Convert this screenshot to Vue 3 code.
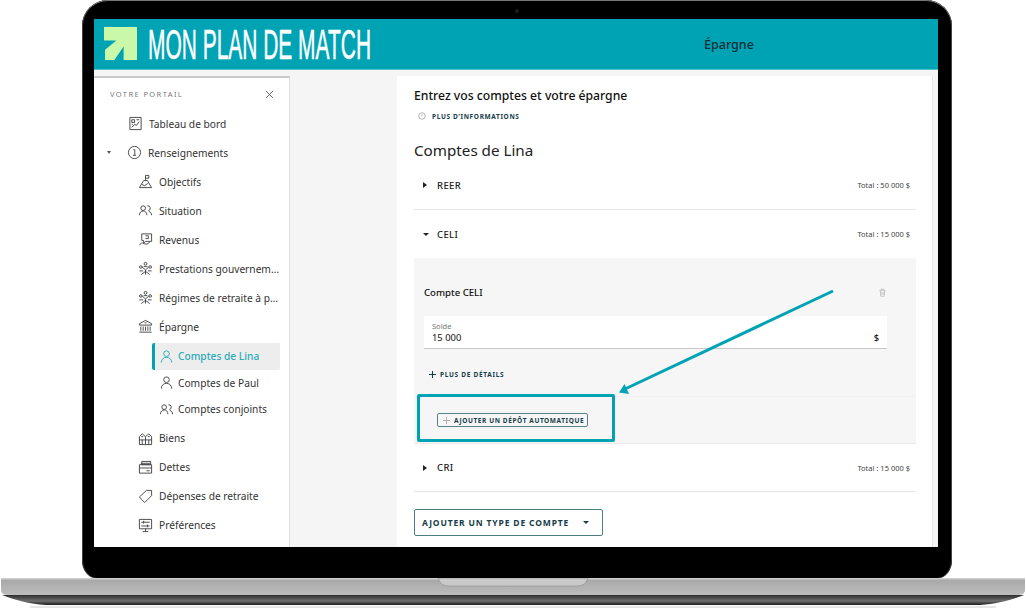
<script setup>
const icons = {
  dash: 'M2 1.500h12v13H2zM4 4h3v3H4zM4 12l3-3 2 1 3-4M9 4h3M4 9h1',
  info: 'M8 1.500a6.500 6.500 0 1 0 0 13a6.500 6.500 0 0 0 0-13zM6.800 5h1.500v6M6.300 11h3.400',
  goal: 'M1.500 14.500h13L10 7H6zM8 7V1.500h3.500v3H8M4 11l3 1.500 3.500-2.500',
  two: 'M5.500 3a2.300 2.300 0 1 0 0 5a2.300 2.300 0 0 0 0-5zM1.500 13c0-6 8-6 8 0M10 3a2.300 2.300 0 0 1 1 5M11.500 9c2 .5 3 2 3 4',
  money: 'M4 2h10.500v8H8l-2 2V9H4zM1.500 14c2-3 3.500-2.500 5-1.500l3 .5 3-2M8 4h3v3H8',
  gov: 'M8 1.500a1.500 1.500 0 1 0 0 3a1.500 1.500 0 0 0 0-3zM3 5a1.400 1.400 0 1 0 0 2.800a1.400 1.400 0 0 0 0-2.800zM13 5a1.400 1.400 0 1 0 0 2.800a1.400 1.400 0 0 0 0-2.800zM4.500 6.500L8 9.500l3.500-3M6 6h4M8 9.500v5M3.500 14.500L8 11l4.500 3.500M1.500 10.500h4M10.500 10.500h4',
  bank: 'M8 1.500L1.500 5v1.500h13V5zM3 8v4.500M5.500 8v4.500M8 8v4.500M10.500 8v4.500M13 8v4.500M1.500 14h13M7 4h2',
  one: 'M8 2a3 3 0 1 0 0 6a3 3 0 0 0 0-6zM2.500 14.500c0-7.500 11-7.500 11 0',
  house: 'M1.500 14.500V6L4.500 3 8 6l3.500-3 3 3v8.500zM1.500 9.500h13M4.500 9.500v5M8 6v8.500M11.500 9.500v5M3.500 6h2M10.500 6h2',
  debt: 'M4 1.500h9.500v3.500H4zM3 3.500h10M1.500 5h13v9h-13zM1.500 8.500h13M9 11.500h3.500',
  tag: 'M9 1.500h5.500V7L7 14.500 1.500 8.500zM11.500 4v.5',
  pref: 'M1.500 1.500h13v10h-13zM8 11.500v3M5 14.500h6M3.500 4.500h9M3.500 8.500h9M6 3v3M10 7v3'
}
const items = [
  { label: 'Tableau de bord', icon: 'dash', cls: 'lvl0' },
  { label: 'Renseignements', icon: 'info', cls: 'lvl0b', caret: true },
  { label: 'Objectifs', icon: 'goal', cls: 'lvl1' },
  { label: 'Situation', icon: 'two', cls: 'lvl1' },
  { label: 'Revenus', icon: 'money', cls: 'lvl1' },
  { label: 'Prestations gouvernementales', icon: 'gov', cls: 'lvl1' },
  { label: 'Régimes de retraite à prestations', icon: 'gov', cls: 'lvl1' },
  { label: 'Épargne', icon: 'bank', cls: 'lvl1' },
  { label: 'Comptes de Lina', icon: 'one', cls: 'lvl2 first active' },
  { label: 'Comptes de Paul', icon: 'one', cls: 'lvl2' },
  { label: 'Comptes conjoints', icon: 'two', cls: 'lvl2 last' },
  { label: 'Biens', icon: 'house', cls: 'lvl1' },
  { label: 'Dettes', icon: 'debt', cls: 'lvl1' },
  { label: 'Dépenses de retraite', icon: 'tag', cls: 'lvl1' },
  { label: 'Préférences', icon: 'pref', cls: 'lvl1' }
]
</script>

<template>
  <div class="page">
    <div class="lid">
      <span class="camera"></span>
      <div class="screen">
        <header class="topbar">
          <svg class="logo" viewBox="0 0 32 32" width="33" height="33">
            <path d="M0 0H32V32H19V19L10 32H1V22L12 13H0Z" fill="#c9f8a9" />
          </svg>
          <div class="brandbox"><span class="brand">MON PLAN DE MATCH</span></div>
          <div class="pagetitle">Épargne</div>
        </header>
        <div class="body">
          <aside class="sidebar">
            <div class="side-head">
              <span>VOTRE PORTAIL</span>
              <svg viewBox="0 0 10 10" width="9" height="9"><path d="M1 1l8 8M9 1l-8 8" stroke="#555" fill="none" /></svg>
            </div>
            <nav class="nav">
              <div v-for="it in items" :key="it.label" class="row" :class="it.cls">
                <span v-if="it.caret" class="caret down small"></span>
                <svg class="ico" viewBox="0 0 16 16" width="15" height="15"><path :d="icons[it.icon]" /></svg>
                <span class="lbl">{{ it.label }}</span>
              </div>
            </nav>
          </aside>
          <div class="gutter"></div>
          <main class="main">
            <h1>Entrez vos comptes et votre épargne</h1>
            <div class="more">
              <svg viewBox="0 0 16 16" width="8" height="8"><circle cx="8" cy="8" r="6.500" fill="none" stroke="#999" stroke-width="1.500" /><path d="M8 5v4" stroke="#999" stroke-width="1.500" /></svg>
              <span>PLUS D’INFORMATIONS</span>
            </div>
            <h2>Comptes de Lina</h2>

            <div class="acc">
              <span class="caret right"></span><b>REER</b><span class="total">Total : 50 000 $</span>
            </div>
            <div class="acc open">
              <span class="caret down"></span><b>CELI</b><span class="total">Total : 15 000 $</span>
            </div>

            <section class="panel">
              <div class="panel-top">
                <div class="panel-head">
                  <strong>Compte CELI</strong>
                  <svg viewBox="0 0 12 12" width="9" height="9"><path d="M2 3h8M3 3l.7 8h4.600L9 3M4.500 3V1.500h3V3M5 5v4M7 5v4" fill="none" stroke="#b5b5b5" /></svg>
                </div>
                <div class="field">
                  <div class="field-txt"><small>Solde</small><span>15 000</span></div>
                  <span class="cur">$</span>
                </div>
                <div class="details">
                  <svg viewBox="0 0 8 8" width="7" height="7"><path d="M4 0v8M0 4h8" stroke="#143c46" stroke-width="1.200" /></svg>
                  <span>PLUS DE DÉTAILS</span>
                </div>
              </div>
              <div class="panel-bottom">
                <button class="depot" type="button">
                  <svg viewBox="0 0 8 8" width="7" height="7"><path d="M4 0v8M0 4h8" stroke="#aaa" /></svg>
                  <span>AJOUTER UN DÉPÔT AUTOMATIQUE</span>
                </button>
              </div>
            </section>

            <div class="acc cri">
              <span class="caret right"></span><b>CRI</b><span class="total">Total : 15 000 $</span>
            </div>

            <button class="addtype" type="button">
              <span>AJOUTER UN TYPE DE COMPTE</span><span class="caret down dark"></span>
            </button>
          </main>
          <div class="edge"></div>
        </div>
      </div>
    </div>

    <svg class="base" viewBox="0 0 1026 30" width="1026" height="30">
      <defs>
        <linearGradient id="silver" x1="0" y1="0" x2="0" y2="1">
          <stop offset="0" stop-color="#d6d6d6" />
          <stop offset=".15" stop-color="#a9a9a9" />
          <stop offset="1" stop-color="#bdbdbd" />
        </linearGradient>
        <linearGradient id="under" x1="0" y1="0" x2="0" y2="1">
          <stop offset="0" stop-color="#2e2e2e" />
          <stop offset=".6" stop-color="#6f6f6f" />
          <stop offset="1" stop-color="#1c1c1c" />
        </linearGradient>
      </defs>
      <path d="M2 17C14 22 30 26 46 27H980C996 26 1012 22 1024 17Z" fill="url(#under)" />
      <path d="M1 0H1025V12Q1025 17 1018 17H8Q1 17 1 12Z" fill="url(#silver)" />
      <path d="M438 0H588L586 4Q584 8 578 8H448Q442 8 440 4Z" fill="#c9c9c9" stroke="#8d8d8d" stroke-width=".6" />
      <path d="M30 29H996" stroke="#cfcfcf" />
    </svg>

    <div class="callout"></div>
    <svg class="arrow" viewBox="0 0 1026 608" width="1026" height="608">
      <path d="M833 291L625 389" stroke="#00a3b4" stroke-width="3" fill="none" />
      <path d="M619 392.500L624.500 384L629 394Z" fill="#00a3b4" />
    </svg>
  </div>
</template>

<style>
html, body { margin: 0; background: #fff; overflow: hidden; }
</style>

<style scoped>
.page {
  position: relative;
  width: 1026px;
  height: 608px;
  overflow: hidden;
  background: #fff;
  font-family: "Noto Sans", "Liberation Sans", sans-serif;
  color: #222;
}
.lid {
  position: relative;
  box-sizing: border-box;
  width: 870px;
  height: 578px;
  margin-left: 82px;
  padding: 19px 14px 31px 12px;
  background: #000;
  border-radius: 26px 26px 14px 14px / 26px 26px 18px 18px;
  box-shadow: inset 0 1px 0 #777, inset 1px 0 0 #444, inset -1px 0 0 #444;
}
.camera {
  position: absolute;
  top: 9px;
  left: 433px;
  width: 4px;
  height: 4px;
  border-radius: 50%;
  background: #1c1c22;
}
.screen {
  display: flex;
  flex-direction: column;
  height: 528px;
  overflow: hidden;
  background: #f5f5f5;
}
.topbar {
  display: flex;
  align-items: center;
  flex: none;
  height: 51px;
  padding-left: 10px;
  box-sizing: border-box;
  background: #00a3b4;
  border-bottom: 1px solid #4fc2cd;
}
.logo { flex: none; margin-top: -1px; }
.brandbox {
  flex: none;
  width: 222px;
  margin-left: 11px;
  height: 40px;
}
.brand {
  display: block;
  width: 400px;
  font-family: "Liberation Sans", sans-serif;
  font-size: 43px;
  line-height: 40px;
  color: #fff;
  white-space: nowrap;
  -webkit-text-stroke: .5px #fff;
  transform: scaleX(.487);
  transform-origin: left center;
}
.pagetitle {
  flex: none;
  width: 120px;
  margin-left: 299px;
  text-align: center;
  font-size: 12.500px;
  font-weight: 500;
  color: #0c2f38;
}
.body {
  display: flex;
  flex: 1;
  min-height: 0;
  padding-top: 6px;
}
.sidebar {
  flex: none;
  width: 196px;
  box-sizing: border-box;
  background: #fff;
  border-top: 2px solid #c9c9c9;
  border-right: 1px solid #e2e2e2;
  overflow: hidden;
}
.side-head {
  display: flex;
  justify-content: space-between;
  align-items: center;
  height: 14px;
  margin-top: 9px;
  padding: 0 15px 0 16px;
  font-size: 7.500px;
  letter-spacing: 1.400px;
  color: #7a7a7a;
}
.nav { padding-top: 8px; }
.row {
  display: flex;
  align-items: center;
  height: 29px;
  font-size: 10.200px;
  color: #333;
  white-space: nowrap;
}
.ico {
  flex: none;
  fill: none;
  stroke: #444;
  stroke-width: 1;
  margin-right: 6px;
}
.lbl { overflow: hidden; text-overflow: ellipsis; }
.lvl0 { padding-left: 34px; }
.lvl0b { padding-left: 13px; }
.lvl0b .caret { margin-right: 16px; }
.lvl1 { padding-left: 44px; width: 186px; box-sizing: border-box; }
.lvl2 {
  height: 26.500px;
  padding-left: 4px;
  margin-left: 58px;
  width: 128px;
  box-sizing: border-box;
  border-left: 3px solid transparent;
}
.lvl2 .ico { margin-right: 4px; }
.lvl2.first { margin-top: 2px; }
.lvl2.last { margin-bottom: 1px; }
.active {
  color: #2eaab8;
  background: #ededed;
  border-left-color: #00a3b4;
  border-radius: 2px;
  font-weight: 500;
}
.active .ico { stroke: #2eaab8; }
.gutter { flex: none; width: 107px; }
.main {
  flex: none;
  width: 535px;
  box-sizing: border-box;
  padding: 12px 16px 0 17px;
  background: #fff;
  overflow: hidden;
}
h1 {
  margin: 0;
  height: 16px;
  font-size: 12.200px;
  line-height: 16px;
  font-weight: 500;
  color: #111;
}
.more {
  display: flex;
  align-items: center;
  height: 10px;
  margin-top: 7px;
  padding-left: 4px;
  font-size: 6.500px;
  font-weight: 700;
  letter-spacing: .65px;
  color: #153e4a;
}
.more span { margin-left: 6px; }
h2 {
  margin: 18px 0 0;
  height: 22px;
  font-size: 15.200px;
  line-height: 22px;
  font-weight: 400;
  color: #222;
}
.acc {
  display: flex;
  align-items: center;
  height: 49px;
  box-sizing: border-box;
  padding: 0 6px 0 9px;
  border-bottom: 1px solid #e6e6e6;
  font-size: 9.500px;
  color: #222;
}
.acc b { margin-left: 10px; font-weight: 500; letter-spacing: .4px; }
.acc.open { height: 48px; border-bottom: 0; }
.acc.open b { margin-left: 8px; }
.acc.cri { height: 48px; }
.total { margin-left: auto; font-size: 7.500px; color: #444; }
.caret { flex: none; display: inline-block; width: 0; height: 0; border-style: solid; border-color: transparent; }
.caret.right { border-width: 3px 0 3px 4px; border-left-color: #222; }
.caret.down { border-width: 3.500px 3px 0; border-top-color: #222; }
.caret.small { border-width: 3px 2.500px 0; border-top-color: #555; }
.panel {
  border-bottom: 1px solid #e9e9e9;
  background: #f6f6f6;
}
.panel-top {
  box-sizing: border-box;
  height: 139px;
  padding: 0 29px 0 10px;
  border-bottom: 1px solid #f1f1f1;
}
.panel-head {
  display: flex;
  justify-content: space-between;
  align-items: center;
  height: 58px;
  padding-top: 10px;
  box-sizing: border-box;
  font-size: 9.600px;
  color: #111;
}
.panel-head strong { font-weight: 500; }
.field {
  display: flex;
  align-items: flex-end;
  justify-content: space-between;
  box-sizing: border-box;
  height: 33px;
  padding: 0 8px 4px 8px;
  background: #fff;
  border-bottom: 1px solid #c9c9c9;
}
.field-txt { display: flex; flex-direction: column; }
.field small { font-size: 7.500px; line-height: 10px; color: #777; }
.field span { font-size: 9.400px; line-height: 13px; color: #111; }
.cur { font-weight: 500; }
.details {
  display: flex;
  align-items: center;
  gap: 4px;
  margin-top: 20px;
  padding-left: 5px;
  height: 10px;
  font-size: 6.500px;
  font-weight: 700;
  letter-spacing: .7px;
  color: #153e4a;
}
.panel-bottom {
  height: 46px;
  padding: 16px 0 0 23px;
  box-sizing: border-box;
}
.depot {
  display: flex;
  align-items: center;
  gap: 4px;
  box-sizing: border-box;
  width: 151px;
  height: 14px;
  padding: 0 0 0 5px;
  background: #f6f6f6;
  border: 1px solid #5b8188;
  border-radius: 2px;
  font-family: inherit;
  font-size: 6.500px;
  font-weight: 700;
  letter-spacing: .6px;
  white-space: nowrap;
  color: #153e4a;
}
.depot svg { flex: none; }
.addtype {
  display: flex;
  align-items: center;
  justify-content: space-between;
  box-sizing: border-box;
  width: 189px;
  height: 27px;
  margin-top: 17px;
  padding: 0 13px 0 7px;
  background: #fff;
  border: 1px solid #4f7d85;
  border-radius: 2px;
  font-family: inherit;
  font-size: 8.500px;
  font-weight: 700;
  letter-spacing: .85px;
  color: #153e4a;
}
.caret.dark { border-top-color: #153e4a; }
.edge { flex: 1; background: #f5f5f5; border-left: 1px solid #e6e6e6; }
.base { display: block; }
.callout {
  position: absolute;
  left: 417px;
  top: 394px;
  width: 198px;
  height: 48px;
  box-sizing: border-box;
  border: 3px solid #00a3b4;
  border-radius: 2px;
}
.arrow { position: absolute; left: 0; top: 0; pointer-events: none; }
</style>
